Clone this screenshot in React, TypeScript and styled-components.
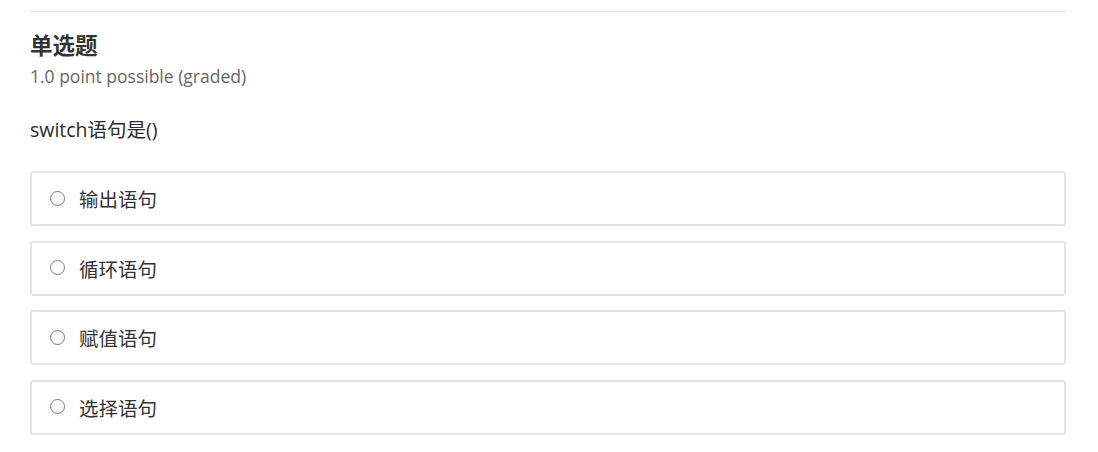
import React from "react";
import styled, { createGlobalStyle } from "styled-components";

const GlobalStyle = createGlobalStyle`
  html, body {
    margin: 0;
    padding: 0;
    background: #fff;
    font-family: "Open Sans", "Noto Sans CJK SC", sans-serif;
    color: #313131;
  }
`;

const Problem = styled.div`
  margin: 0 32px 0 30px;
  padding-top: 11px;
`;

const Divider = styled.hr`
  border: 0;
  border-top: 1px solid #dedede;
  margin: 0;
`;

const Title = styled.h3`
  margin: 19px 0 0;
  font-size: 22.5px;
  line-height: 30px;
  font-weight: 700;
  color: #333;
`;

const Meta = styled.div`
  font-size: 17.5px;
  line-height: 31px;
  color: #666;
`;

const Question = styled.p`
  margin: 24px 0 0;
  font-size: 19.5px;
  line-height: 28px;
  color: #2b2b2b;
`;

const Choices = styled.div`
  margin-top: 27px;
  display: flex;
  flex-direction: column;
  gap: 14.5px;
`;

const Choice = styled.label`
  display: flex;
  align-items: center;
  height: 55px;
  box-sizing: border-box;
  padding: 0 18px;
  border: 2px solid #e4e4e4;
  border-radius: 3px;
  cursor: pointer;
`;

const Radio = styled.span`
  width: 13px;
  height: 13px;
  border: 1.3px solid #7a7a7a;
  border-radius: 50%;
  margin-right: 14px;
  flex-shrink: 0;
  margin-top: -1px;
`;

const ChoiceText = styled.span`
  font-size: 19.5px;
  color: #333;
`;

const options = ["输出语句", "循环语句", "赋值语句", "选择语句"];

export default function App() {
  return (
    <>
      <GlobalStyle />
      <Problem>
        <Divider />
        <Title>单选题</Title>
        <Meta>1.0 point possible (graded)</Meta>
        <Question>switch语句是()</Question>
        <Choices>
          {options.map(o => (
            <Choice key={o}>
              <Radio />
              <ChoiceText>{o}</ChoiceText>
            </Choice>
          ))}
        </Choices>
      </Problem>
    </>
  );
}
